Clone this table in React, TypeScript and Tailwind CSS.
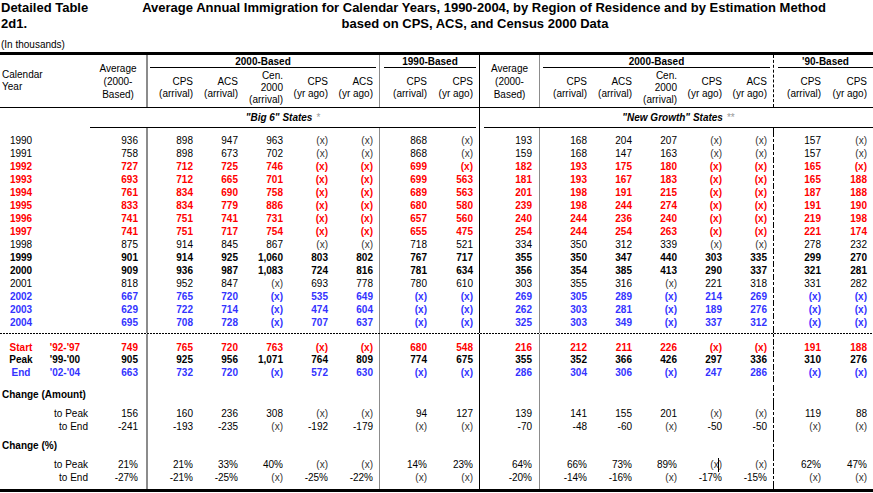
import React from 'react';

type Tone = 'n' | 'r' | 'b' | 'k';

const toneCls: Record<Tone, string> = {
  n: 'text-black',
  r: 'text-[#ff0000] font-bold',
  b: 'text-[#3333ff] font-bold',
  k: 'text-black font-bold',
};

// avg | 2000-Based x5 | 1990-Based x2 | avg | 2000-Based x5 | '90-Based x2
const colCls = [
  'w-[56px] pr-2',
  'w-[53px] pr-1.5 border-l-2 border-[#8c8c8c]',
  'w-[45px] pr-1.5',
  'w-[45px] pr-1.5',
  'w-[45px] pr-1.5',
  'w-[45px] pr-1.5',
  'w-[54px] pr-1.5 border-l border-[#8c8c8c]',
  'w-[46px] pr-1.5',
  'w-[60px] pr-[7px] border-l border-black',
  'w-[54px] pr-1.5 border-l border-[#8c8c8c]',
  'w-[45px] pr-1.5',
  'w-[45px] pr-1.5',
  'w-[45px] pr-1.5',
  'w-[45px] pr-1.5',
  'w-[54px] pr-1.5 border-l border-dashed border-black',
  'w-[46px] pr-1.5',
];

const years: [string, Tone, string[]][] = [
  ['1990', 'n', ['936', '898', '947', '963', '(x)', '(x)', '868', '(x)', '193', '168', '204', '207', '(x)', '(x)', '157', '(x)']],
  ['1991', 'n', ['758', '898', '673', '702', '(x)', '(x)', '868', '(x)', '159', '168', '147', '163', '(x)', '(x)', '157', '(x)']],
  ['1992', 'r', ['727', '712', '725', '746', '(x)', '(x)', '699', '(x)', '182', '193', '175', '180', '(x)', '(x)', '165', '(x)']],
  ['1993', 'r', ['693', '712', '665', '701', '(x)', '(x)', '699', '563', '181', '193', '167', '183', '(x)', '(x)', '165', '188']],
  ['1994', 'r', ['761', '834', '690', '758', '(x)', '(x)', '689', '563', '201', '198', '191', '215', '(x)', '(x)', '187', '188']],
  ['1995', 'r', ['833', '834', '779', '886', '(x)', '(x)', '680', '580', '239', '198', '244', '274', '(x)', '(x)', '191', '190']],
  ['1996', 'r', ['741', '751', '741', '731', '(x)', '(x)', '657', '560', '240', '244', '236', '240', '(x)', '(x)', '219', '198']],
  ['1997', 'r', ['741', '751', '717', '754', '(x)', '(x)', '655', '475', '254', '244', '254', '263', '(x)', '(x)', '221', '174']],
  ['1998', 'n', ['875', '914', '845', '867', '(x)', '(x)', '718', '521', '334', '350', '312', '339', '(x)', '(x)', '278', '232']],
  ['1999', 'k', ['901', '914', '925', '1,060', '803', '802', '767', '717', '355', '350', '347', '440', '303', '335', '299', '270']],
  ['2000', 'k', ['909', '936', '987', '1,083', '724', '816', '781', '634', '356', '354', '385', '413', '290', '337', '321', '281']],
  ['2001', 'n', ['818', '952', '847', '(x)', '693', '778', '780', '610', '303', '355', '316', '(x)', '221', '318', '331', '282']],
  ['2002', 'b', ['667', '765', '720', '(x)', '535', '649', '(x)', '(x)', '269', '305', '289', '(x)', '214', '269', '(x)', '(x)']],
  ['2003', 'b', ['629', '722', '714', '(x)', '474', '604', '(x)', '(x)', '262', '303', '281', '(x)', '189', '276', '(x)', '(x)']],
  ['2004', 'b', ['695', '708', '728', '(x)', '707', '637', '(x)', '(x)', '325', '303', '349', '(x)', '337', '312', '(x)', '(x)']],
];

const periods: [string, string, Tone, string[]][] = [
  ['Start', "'92-'97", 'r', ['749', '765', '720', '763', '(x)', '(x)', '680', '548', '216', '212', '211', '226', '(x)', '(x)', '191', '188']],
  ['Peak', "'99-'00", 'k', ['905', '925', '956', '1,071', '764', '809', '774', '675', '355', '352', '366', '426', '297', '336', '310', '276']],
  ['End', "'02-'04", 'b', ['663', '732', '720', '(x)', '572', '630', '(x)', '(x)', '286', '304', '306', '(x)', '247', '286', '(x)', '(x)']],
];

const amount: [string, string[]][] = [
  ['to Peak', ['156', '160', '236', '308', '(x)', '(x)', '94', '127', '139', '141', '155', '201', '(x)', '(x)', '119', '88']],
  ['to End', ['-241', '-193', '-235', '(x)', '-192', '-179', '(x)', '(x)', '-70', '-48', '-60', '(x)', '-50', '-50', '(x)', '(x)']],
];

const percent: [string, string[]][] = [
  ['to Peak', ['21%', '21%', '33%', '40%', '(x)', '(x)', '14%', '23%', '64%', '66%', '73%', '89%', 'CURSOR', '(x)', '62%', '47%']],
  ['to End', ['-27%', '-21%', '-25%', '(x)', '-25%', '-22%', '(x)', '(x)', '-20%', '-14%', '-16%', '(x)', '-17%', '-15%', '(x)', '(x)']],
];

function Cell({ v, tone }: { v: string; tone: Tone }) {
  if (v === 'CURSOR') {
    return (
      <span className="relative text-[#333]">
        (x)
        <span className="absolute left-[8px] top-[-1px] h-[14px] w-px bg-black" />
      </span>
    );
  }
  if (v === '(x)' && tone === 'n') return <span className="text-[#333]">(x)</span>;
  return <>{v}</>;
}

function Row({
  label,
  vals,
  tone = 'n',
  h = 'h-[13px] leading-[13px]',
}: {
  label?: React.ReactNode;
  vals?: string[];
  tone?: Tone;
  h?: string;
}) {
  return (
    <div className={`flex ${h} ${toneCls[tone]}`}>
      <div className="w-[90px] shrink-0 flex">{label}</div>
      {colCls.map((c, i) => (
        <div key={i} className={`${c} shrink-0 text-right whitespace-nowrap`}>
          {vals ? <Cell v={vals[i]} tone={tone} /> : null}
        </div>
      ))}
    </div>
  );
}

function SubHead({ w, lines }: { w: string; lines: string[] }) {
  return (
    <div className={`${w} shrink-0 flex flex-col justify-center items-end pr-1.5 leading-[12px] text-right`}>
      {lines.map((l, i) => (
        <div key={i}>{l}</div>
      ))}
    </div>
  );
}

function Header() {
  const arr = ['CPS', '(arrival)'];
  const acsArr = ['ACS', '(arrival)'];
  const cen = ['Cen.', '2000', '(arrival)'];
  const cpsAgo = ['CPS', '(yr ago)'];
  const acsAgo = ['ACS', '(yr ago)'];
  return (
    <div className="flex h-[53px] border-b border-black">
      <div className="w-[90px] shrink-0 flex flex-col justify-center pl-0.5 leading-[12px]">
        <div>Calendar</div>
        <div>Year</div>
      </div>
      <div className="w-[56px] shrink-0 flex flex-col justify-center items-center leading-[13px] text-center">
        <div>Average</div>
        <div>(2000-</div>
        <div>Based)</div>
      </div>

      <div className="w-[233px] shrink-0 border-l-2 border-[#8c8c8c] flex flex-col">
        <div className="h-[13px] ml-[2px] mr-[3px] border-b border-black text-center font-bold leading-[14px]">
          2000-Based
        </div>
        <div className="flex flex-1">
          <SubHead w="w-[51px]" lines={arr} />
          <SubHead w="w-[45px]" lines={acsArr} />
          <SubHead w="w-[45px]" lines={cen} />
          <SubHead w="w-[45px]" lines={cpsAgo} />
          <SubHead w="w-[45px]" lines={acsAgo} />
        </div>
      </div>

      <div className="w-[100px] shrink-0 border-l border-[#8c8c8c] flex flex-col">
        <div className="h-[13px] ml-[4px] mr-[3px] border-b border-black text-center font-bold leading-[14px]">
          1990-Based
        </div>
        <div className="flex flex-1">
          <SubHead w="w-[53px]" lines={arr} />
          <SubHead w="w-[46px]" lines={cpsAgo} />
        </div>
      </div>

      <div className="w-[60px] shrink-0 border-l border-black flex flex-col justify-center items-center leading-[13px] text-center">
        <div>Average</div>
        <div>(2000-</div>
        <div>Based)</div>
      </div>

      <div className="w-[234px] shrink-0 border-l border-[#8c8c8c] flex flex-col">
        <div className="h-[13px] ml-[3px] mr-[3px] border-b border-black text-center font-bold leading-[14px]">
          2000-Based
        </div>
        <div className="flex flex-1">
          <SubHead w="w-[53px]" lines={arr} />
          <SubHead w="w-[45px]" lines={acsArr} />
          <SubHead w="w-[45px]" lines={cen} />
          <SubHead w="w-[45px]" lines={cpsAgo} />
          <SubHead w="w-[45px]" lines={acsAgo} />
        </div>
      </div>

      <div className="w-[100px] shrink-0 border-l border-dashed border-black flex flex-col">
        <div className="h-[13px] ml-[4px] border-b border-black text-center font-bold leading-[14px]">
          '90-Based
        </div>
        <div className="flex flex-1">
          <SubHead w="w-[53px]" lines={arr} />
          <SubHead w="w-[46px]" lines={cpsAgo} />
        </div>
      </div>
    </div>
  );
}

export default function App() {
  return (
    <div className="w-[873px] h-[493px] overflow-hidden bg-white text-black text-[10px] font-['Liberation_Sans',Arial,sans-serif]">
      {/* Title */}
      <div className="h-[52px] flex flex-col">
        <div className="h-[32px] flex text-[13px] font-bold leading-[16px]">
          <div className="w-[128px] shrink-0 pl-px">
            <div>Detailed Table</div>
            <div>2d1.</div>
          </div>
          <div className="w-[712px] shrink-0 text-center">
            <div>Average Annual Immigration for Calendar Years, 1990-2004, by Region of Residence and by Estimation Method</div>
            <div className="pr-[18px]">based on CPS, ACS, and Census 2000 Data</div>
          </div>
        </div>
        <div className="mt-[7px] h-[12px] leading-[12px] text-[10px] pl-px">(In thousands)</div>
      </div>

      <div className="border-t-[3px] border-black">
        <Header />

        {/* Region row */}
        <div className="flex h-[20px]">
          <div className="w-[479px] shrink-0">
            <div className="ml-[90px] mr-[3px] h-full border-b border-black flex items-center justify-center font-bold italic">
              "Big 6" States <span className="ml-1 text-[#999] not-italic font-normal">*</span>
            </div>
          </div>
          <div className="w-[394px] shrink-0 border-l border-black">
            <div className="ml-[4px] h-full border-b border-black flex items-center justify-center font-bold italic">
              "New Growth" States <span className="ml-1 text-[#999] not-italic font-normal">**</span>
            </div>
          </div>
        </div>

        <Row h="h-[6px]" />

        {years.map(([y, tone, vals]) => (
          <Row
            key={y}
            tone={tone}
            vals={vals}
            label={<div className="w-[42px] text-center">{y}</div>}
          />
        ))}

        {/* dotted separator */}
        <Row h="h-[4px]" />
        <div className="w-[873px] h-px bg-[repeating-linear-gradient(90deg,#000_0_2px,transparent_2px_3px)]" />
        <Row h="h-[7.5px]" />

        {periods.map(([name, range, tone, vals]) => (
          <Row
            key={name}
            tone={tone}
            vals={vals}
            h="h-[12.5px] leading-[12.5px]"
            label={
              <>
                <div className="w-[42px] text-center">{name}</div>
                <div className="w-[46px] text-center">{range}</div>
              </>
            }
          />
        ))}

        <Row h="h-[8.5px]" />
        <Row label={<div className="pl-0.5 font-bold whitespace-nowrap">Change (Amount)</div>} />
        <Row h="h-[6px]" />
        {amount.map(([l, vals]) => (
          <Row key={l} vals={vals} label={<div className="w-full text-right pr-0.5">{l}</div>} />
        ))}
        <Row h="h-[6px]" />
        <Row label={<div className="pl-0.5 font-bold whitespace-nowrap">Change (%)</div>} />
        <Row h="h-[6px]" />
        {percent.map(([l, vals]) => (
          <Row key={l} vals={vals} label={<div className="w-full text-right pr-0.5">{l}</div>} />
        ))}
        <Row h="h-[5px]" />
        <div className="border-t-[3px] border-black" />
      </div>
    </div>
  );
}
